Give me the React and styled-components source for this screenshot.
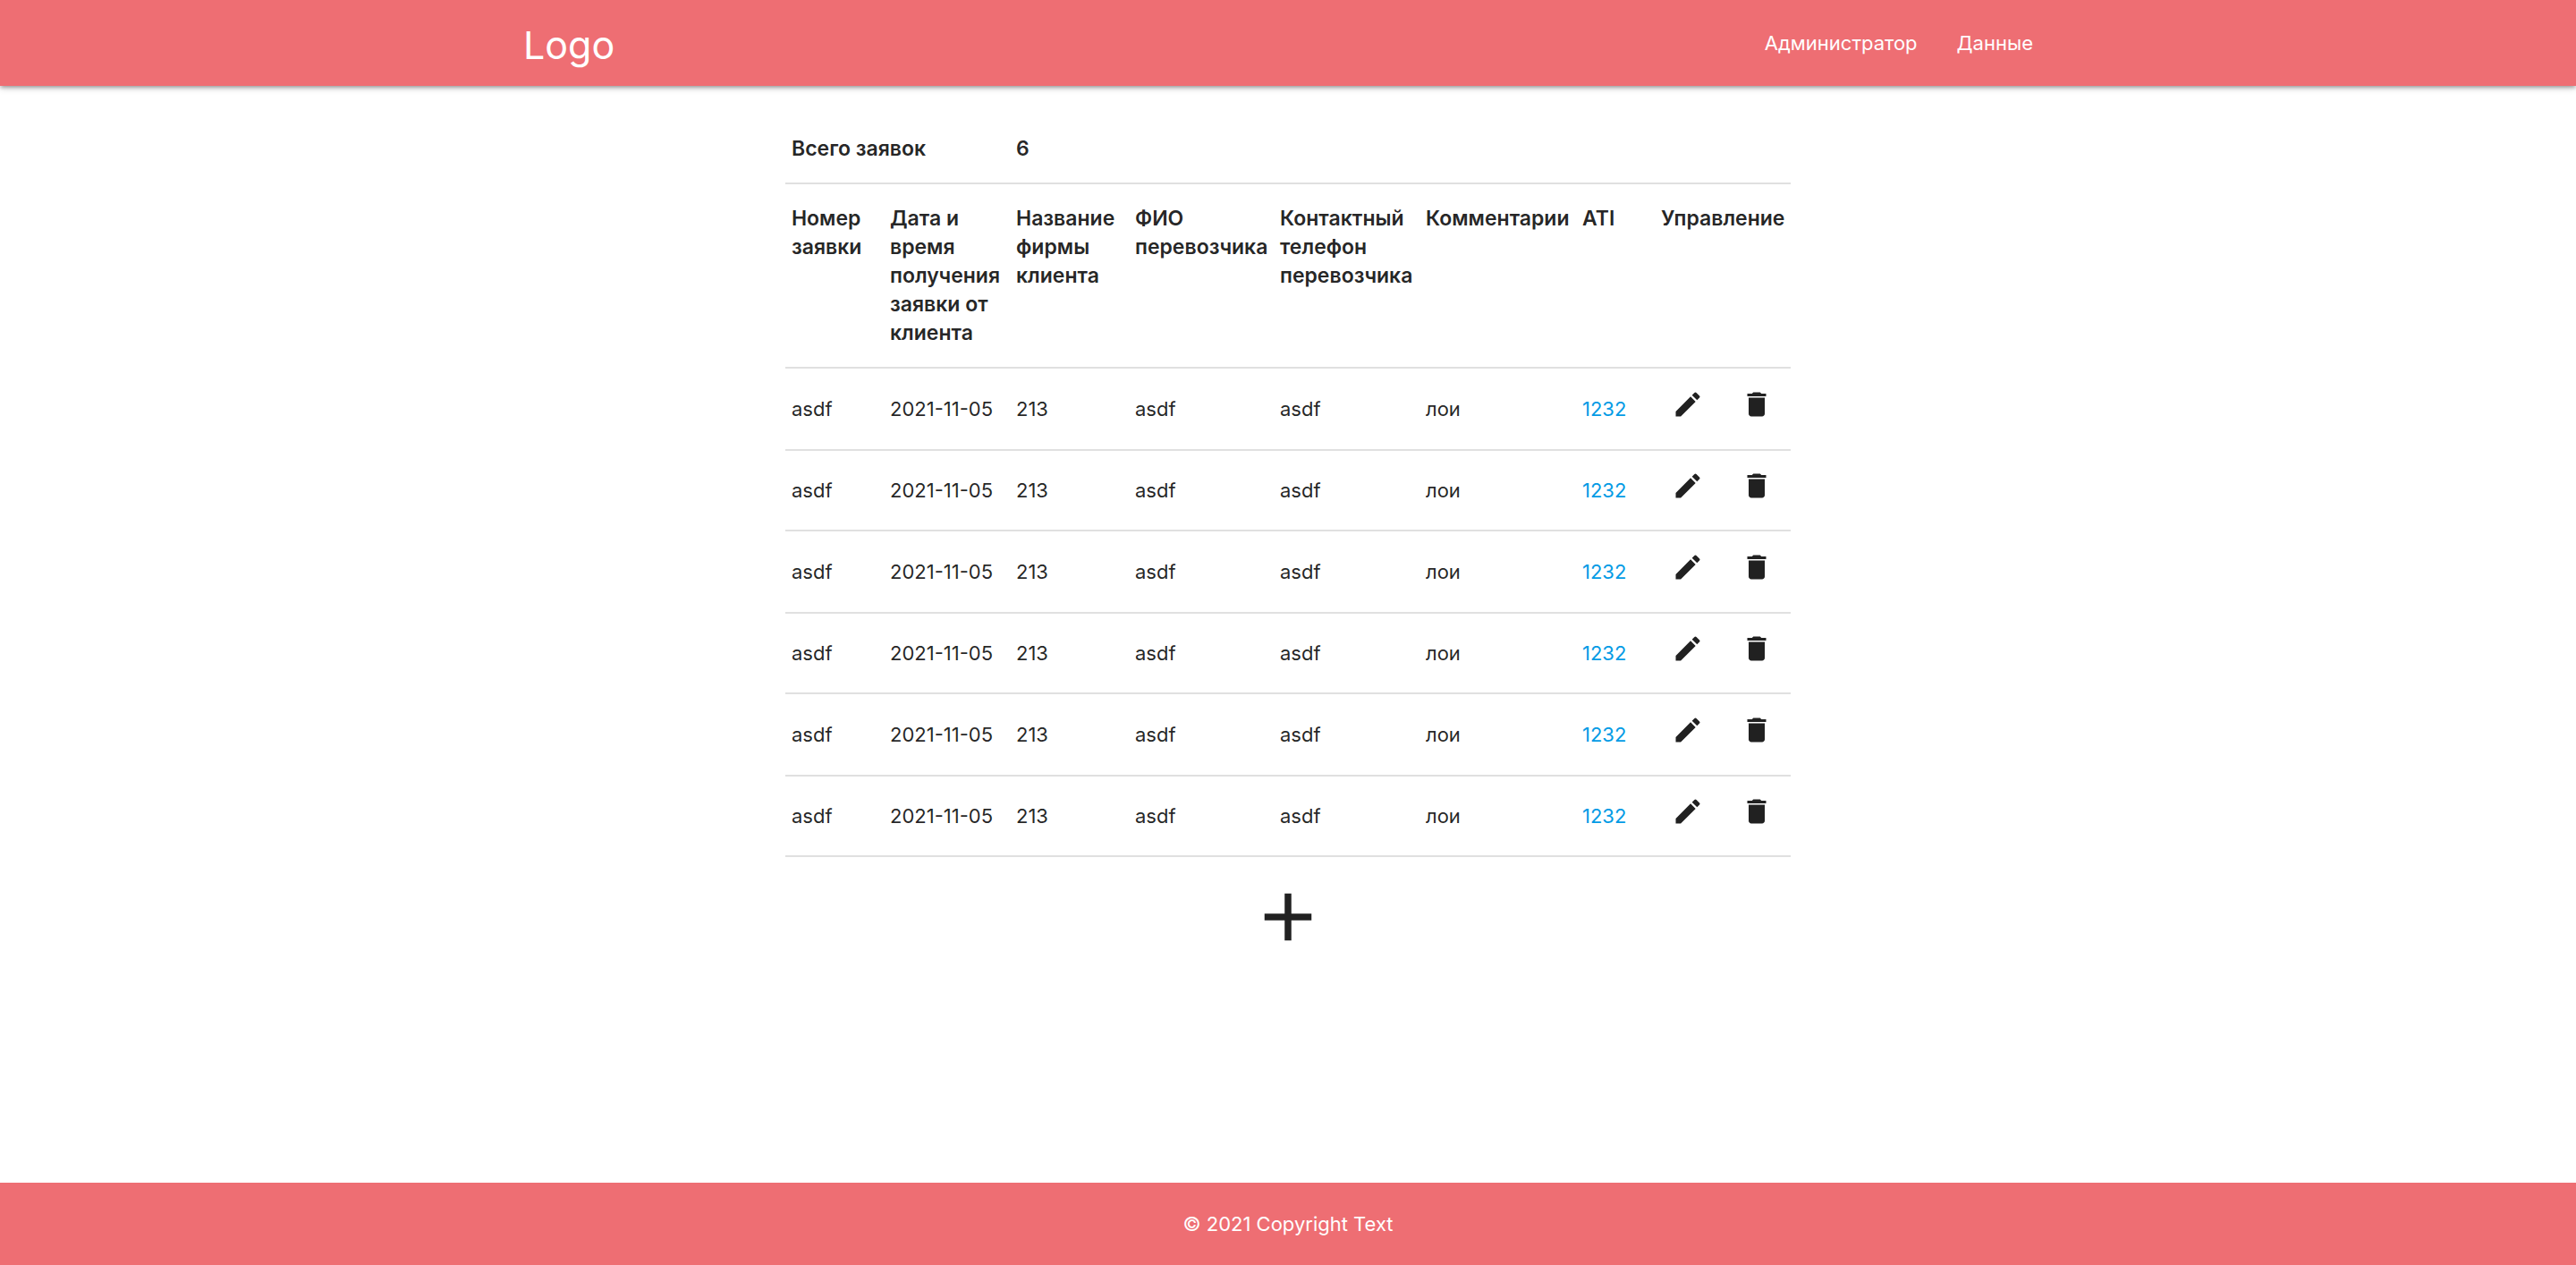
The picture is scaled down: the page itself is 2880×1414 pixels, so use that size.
import React from "react";
import styled, { createGlobalStyle } from "styled-components";

const GlobalStyle = createGlobalStyle`
  *, *::before, *::after { box-sizing: border-box; }
  body {
    margin: 0;
    background: #fff;
    color: rgba(0, 0, 0, 0.87);
    font-family: Inter, "Liberation Sans", sans-serif;
    font-size: 22px;
    line-height: 32px;
  }
`;

const Page = styled.div`
  display: flex;
  flex-direction: column;
  min-height: 100vh;
`;

const Container = styled.div`
  width: 90%;
  max-width: 1710px;
  margin: 0 auto;
`;

const Header = styled.header`
  background: #ee6e73;
  color: #fff;
  box-shadow: 0 3px 3px 0 rgba(0, 0, 0, 0.14), 0 4px 2px -3px rgba(0, 0, 0, 0.12),
    0 2px 8px 0 rgba(0, 0, 0, 0.2);
`;

const NavBar = styled(Container)`
  display: flex;
  align-items: center;
  justify-content: space-between;
  height: 96px;
`;

const Logo = styled.a`
  padding-top: 4px;
  color: inherit;
  font-size: 43px;
  line-height: 92px;
  text-decoration: none;
`;

const NavLinks = styled.nav`
  display: flex;
`;

const NavLink = styled.a`
  padding: 0 22px;
  color: inherit;
  line-height: 96px;
  text-decoration: none;
`;

const Main = styled.main`
  flex: 1;
`;

const Content = styled(Container)`
  display: flex;
  flex-direction: column;
  align-items: center;
  padding-top: 32px;
`;

const Table = styled.table`
  width: 65%;
  min-width: 1124px;
  table-layout: fixed;
  border-collapse: collapse;
`;

const Col = styled.col`
  width: ${(p) => p.$width}px;
`;

const Row = styled.tr`
  border-bottom: 2px solid #e0e0e0;
`;

const BodyRow = styled(Row)`
  height: 92px;

  &:nth-child(even) {
    height: 90px;
  }
`;

const HeadCell = styled.th`
  padding: 22px 7px;
  font-size: 23px;
  font-weight: 600;
  text-align: left;
  vertical-align: top;
`;

const Cell = styled.td`
  padding: 0 7px;
`;

const AtiLink = styled.a`
  color: #039be5;
  text-decoration: none;
`;

const Actions = styled.div`
  display: flex;
  gap: 41px;
  padding: 0 0 10px 12px;
`;

const IconButton = styled.button`
  display: flex;
  padding: 0;
  border: 0;
  background: none;
  color: inherit;
  cursor: pointer;
`;

const AddButton = styled(IconButton)`
  margin-top: 22px;
`;

const Icon = styled.svg`
  display: block;
  width: ${(p) => p.$size}px;
  height: ${(p) => p.$size}px;
  fill: currentColor;
`;

const Footer = styled.footer`
  padding: 30px 0;
  background: #ee6e73;
  color: #fff;
  text-align: center;
`;

const columns = [
  { title: "Номер заявки", width: 110 },
  { title: "Дата и время получения заявки от клиента", width: 141 },
  { title: "Название фирмы клиента", width: 133 },
  { title: "ФИО перевозчика", width: 162 },
  { title: "Контактный телефон перевозчика", width: 163 },
  { title: "Комментарии", width: 175 },
  { title: "ATI", width: 88 },
  { title: "Управление", width: 152 },
];

const orders = Array.from({ length: 6 }, (_, id) => ({
  id,
  number: "asdf",
  date: "2021-11-05",
  company: "213",
  carrier: "asdf",
  phone: "asdf",
  comment: "лои",
  ati: "1232",
}));

const EditIcon = () => (
  <Icon $size={36} viewBox="0 0 24 24" aria-hidden="true">
    <path d="M3 17.25V21h3.75L17.81 9.94l-3.75-3.75L3 17.25zM20.71 7.04a.996.996 0 0 0 0-1.41l-2.34-2.34a.996.996 0 0 0-1.41 0l-1.83 1.83 3.75 3.75 1.83-1.83z" />
  </Icon>
);

const DeleteIcon = () => (
  <Icon $size={36} viewBox="0 0 24 24" aria-hidden="true">
    <path d="M6 19c0 1.1.9 2 2 2h8c1.1 0 2-.9 2-2V7H6v12zM19 4h-3.5l-1-1h-5l-1 1H5v2h14V4z" />
  </Icon>
);

const AddIcon = () => (
  <Icon $size={90} viewBox="0 0 24 24" aria-hidden="true">
    <path d="M19 13h-6v6h-2v-6H5v-2h6V5h2v6h6v2z" />
  </Icon>
);

export default function App() {
  return (
    <Page>
      <GlobalStyle />
      <Header>
        <NavBar>
          <Logo href="#">Logo</Logo>
          <NavLinks>
            <NavLink href="#admin">Администратор</NavLink>
            <NavLink href="#data">Данные</NavLink>
          </NavLinks>
        </NavBar>
      </Header>
      <Main>
        <Content>
          <Table>
            <colgroup>
              {columns.map((c) => (
                <Col key={c.title} $width={c.width} />
              ))}
            </colgroup>
            <thead>
              <Row>
                <HeadCell colSpan={2}>Всего заявок</HeadCell>
                <HeadCell colSpan={6}>{orders.length}</HeadCell>
              </Row>
              <Row>
                {columns.map((c) => (
                  <HeadCell key={c.title}>{c.title}</HeadCell>
                ))}
              </Row>
            </thead>
            <tbody>
              {orders.map((o) => (
                <BodyRow key={o.id}>
                  <Cell>{o.number}</Cell>
                  <Cell>{o.date}</Cell>
                  <Cell>{o.company}</Cell>
                  <Cell>{o.carrier}</Cell>
                  <Cell>{o.phone}</Cell>
                  <Cell>{o.comment}</Cell>
                  <Cell>
                    <AtiLink href="#ati">{o.ati}</AtiLink>
                  </Cell>
                  <Cell>
                    <Actions>
                      <IconButton type="button" aria-label="Редактировать">
                        <EditIcon />
                      </IconButton>
                      <IconButton type="button" aria-label="Удалить">
                        <DeleteIcon />
                      </IconButton>
                    </Actions>
                  </Cell>
                </BodyRow>
              ))}
            </tbody>
          </Table>
          <AddButton type="button" aria-label="Добавить">
            <AddIcon />
          </AddButton>
        </Content>
      </Main>
      <Footer>© 2021 Copyright Text</Footer>
    </Page>
  );
}
